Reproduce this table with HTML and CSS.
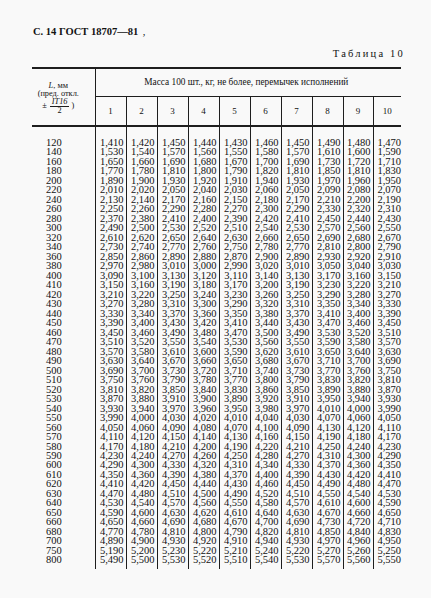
FILE: index.html
```html
<!DOCTYPE html>
<html lang="ru">
<head>
<meta charset="utf-8">
<title>ГОСТ 18707—81, Таблица 10</title>
<link rel="stylesheet" href="styles.css">
</head>
<body>
<div class="page">
  <p class="doc-title">С. 14 ГОСТ 18707—81 <span class="mark">,</span></p>
  <p class="table-caption">Таблица 10</p>
  <table class="mass-table">
    <colgroup>
      <col class="c-len"><col class="c31"><col class="c31"><col class="c31"><col class="c31"><col class="c31"><col class="c31"><col class="c31"><col class="c31"><col class="c30"><col class="c28">
    </colgroup>
    <thead>
      <tr class="h1">
        <th class="len-head" rowspan="2">
          <div class="len-inner">
            <span class="ln"><i>L</i>, мм</span>
            <span class="ln">(пред. откл.</span>
            <span class="ln tol">±<span class="frac"><span class="num">IT16</span><span class="den">2</span></span>&nbsp;)</span>
          </div>
        </th>
        <th class="mass-head" colspan="10">Масса 100 шт., кг, не более, перемычек исполнений</th>
      </tr>
      <tr class="h2">
        <th>1</th><th>2</th><th>3</th><th>4</th><th>5</th><th>6</th><th>7</th><th>8</th><th>9</th><th>10</th>
      </tr>
    </thead>
    <tbody>
      <tr class="first"><td>120</td><td>1,410</td><td>1,420</td><td>1,450</td><td>1,440</td><td>1,430</td><td>1,460</td><td>1,450</td><td>1,490</td><td>1,480</td><td>1,470</td></tr>
      <tr><td>140</td><td>1,530</td><td>1,540</td><td>1,570</td><td>1,560</td><td>1,550</td><td>1,580</td><td>1,570</td><td>1,610</td><td>1,600</td><td>1,590</td></tr>
      <tr><td>160</td><td>1,650</td><td>1,660</td><td>1,690</td><td>1,680</td><td>1,670</td><td>1,700</td><td>1,690</td><td>1,730</td><td>1,720</td><td>1,710</td></tr>
      <tr><td>180</td><td>1,770</td><td>1,780</td><td>1,810</td><td>1,800</td><td>1,790</td><td>1,820</td><td>1,810</td><td>1,850</td><td>1,810</td><td>1,830</td></tr>
      <tr><td>200</td><td>1,890</td><td>1,900</td><td>1,930</td><td>1,920</td><td>1,910</td><td>1,940</td><td>1,930</td><td>1,970</td><td>1,960</td><td>1,950</td></tr>
      <tr><td>220</td><td>2,010</td><td>2,020</td><td>2,050</td><td>2,040</td><td>2,030</td><td>2,060</td><td>2,050</td><td>2,090</td><td>2,080</td><td>2,070</td></tr>
      <tr><td>240</td><td>2,130</td><td>2,140</td><td>2,170</td><td>2,160</td><td>2,150</td><td>2,180</td><td>2,170</td><td>2,210</td><td>2,200</td><td>2,190</td></tr>
      <tr><td>260</td><td>2,250</td><td>2,260</td><td>2,290</td><td>2,280</td><td>2,270</td><td>2,300</td><td>2,290</td><td>2,330</td><td>2,320</td><td>2,310</td></tr>
      <tr><td>280</td><td>2,370</td><td>2,380</td><td>2,410</td><td>2,400</td><td>2,390</td><td>2,420</td><td>2,410</td><td>2,450</td><td>2,440</td><td>2,430</td></tr>
      <tr><td>300</td><td>2,490</td><td>2,500</td><td>2,530</td><td>2,520</td><td>2,510</td><td>2,540</td><td>2,530</td><td>2,570</td><td>2,560</td><td>2,550</td></tr>
      <tr><td>320</td><td>2,610</td><td>2,620</td><td>2,650</td><td>2,640</td><td>2,630</td><td>2,660</td><td>2,650</td><td>2,690</td><td>2,680</td><td>2,670</td></tr>
      <tr><td>340</td><td>2,730</td><td>2,740</td><td>2,770</td><td>2,760</td><td>2,750</td><td>2,780</td><td>2,770</td><td>2,810</td><td>2,800</td><td>2,790</td></tr>
      <tr><td>360</td><td>2,850</td><td>2,860</td><td>2,890</td><td>2,880</td><td>2,870</td><td>2,900</td><td>2,890</td><td>2,930</td><td>2,920</td><td>2,910</td></tr>
      <tr><td>380</td><td>2,970</td><td>2,980</td><td>3,010</td><td>3,000</td><td>2,990</td><td>3,020</td><td>3,010</td><td>3,050</td><td>3,040</td><td>3,030</td></tr>
      <tr><td>400</td><td>3,090</td><td>3,100</td><td>3,130</td><td>3,120</td><td>3,110</td><td>3,140</td><td>3,130</td><td>3,170</td><td>3,160</td><td>3,150</td></tr>
      <tr><td>410</td><td>3,150</td><td>3,160</td><td>3,190</td><td>3,180</td><td>3,170</td><td>3,200</td><td>3,190</td><td>3,230</td><td>3,220</td><td>3,210</td></tr>
      <tr><td>420</td><td>3,210</td><td>3,220</td><td>3,250</td><td>3,240</td><td>3,230</td><td>3,260</td><td>3,250</td><td>3,290</td><td>3,280</td><td>3,270</td></tr>
      <tr><td>430</td><td>3,270</td><td>3,280</td><td>3,310</td><td>3,300</td><td>3,290</td><td>3,320</td><td>3,310</td><td>3,350</td><td>3,340</td><td>3,330</td></tr>
      <tr><td>440</td><td>3,330</td><td>3,340</td><td>3,370</td><td>3,360</td><td>3,350</td><td>3,380</td><td>3,370</td><td>3,410</td><td>3,400</td><td>3,390</td></tr>
      <tr><td>450</td><td>3,390</td><td>3,400</td><td>3,430</td><td>3,420</td><td>3,410</td><td>3,440</td><td>3,430</td><td>3,470</td><td>3,460</td><td>3,450</td></tr>
      <tr><td>460</td><td>3,450</td><td>3,460</td><td>3,490</td><td>3,480</td><td>3,470</td><td>3,500</td><td>3,490</td><td>3,530</td><td>3,520</td><td>3,510</td></tr>
      <tr><td>470</td><td>3,510</td><td>3,520</td><td>3,550</td><td>3,540</td><td>3,530</td><td>3,560</td><td>3,550</td><td>3,590</td><td>3,580</td><td>3,570</td></tr>
      <tr><td>480</td><td>3,570</td><td>3,580</td><td>3,610</td><td>3,600</td><td>3,590</td><td>3,620</td><td>3,610</td><td>3,650</td><td>3,640</td><td>3,630</td></tr>
      <tr><td>490</td><td>3,630</td><td>3,640</td><td>3,670</td><td>3,660</td><td>3,650</td><td>3,680</td><td>3,670</td><td>3,710</td><td>3,700</td><td>3,690</td></tr>
      <tr><td>500</td><td>3,690</td><td>3,700</td><td>3,730</td><td>3,720</td><td>3,710</td><td>3,740</td><td>3,730</td><td>3,770</td><td>3,760</td><td>3,750</td></tr>
      <tr><td>510</td><td>3,750</td><td>3,760</td><td>3,790</td><td>3,780</td><td>3,770</td><td>3,800</td><td>3,790</td><td>3,830</td><td>3,820</td><td>3,810</td></tr>
      <tr><td>520</td><td>3,810</td><td>3,820</td><td>3,850</td><td>3,840</td><td>3,830</td><td>3,860</td><td>3,850</td><td>3,890</td><td>3,880</td><td>3,870</td></tr>
      <tr><td>530</td><td>3,870</td><td>3,880</td><td>3,910</td><td>3,900</td><td>3,890</td><td>3,920</td><td>3,910</td><td>3,950</td><td>3,940</td><td>3,930</td></tr>
      <tr><td>540</td><td>3,930</td><td>3,940</td><td>3,970</td><td>3,960</td><td>3,950</td><td>3,980</td><td>3,970</td><td>4,010</td><td>4,000</td><td>3,990</td></tr>
      <tr><td>550</td><td>3,990</td><td>4,000</td><td>4,030</td><td>4,020</td><td>4,010</td><td>4,040</td><td>4,030</td><td>4,070</td><td>4,060</td><td>4,050</td></tr>
      <tr><td>560</td><td>4,050</td><td>4,060</td><td>4,090</td><td>4,080</td><td>4,070</td><td>4,100</td><td>4,090</td><td>4,130</td><td>4,120</td><td>4,110</td></tr>
      <tr><td>570</td><td>4,110</td><td>4,120</td><td>4,150</td><td>4,140</td><td>4,130</td><td>4,160</td><td>4,150</td><td>4,190</td><td>4,180</td><td>4,170</td></tr>
      <tr><td>580</td><td>4,170</td><td>4,180</td><td>4,210</td><td>4,200</td><td>4,190</td><td>4,220</td><td>4,210</td><td>4,250</td><td>4,240</td><td>4,230</td></tr>
      <tr><td>590</td><td>4,230</td><td>4,240</td><td>4,270</td><td>4,260</td><td>4,250</td><td>4,280</td><td>4,270</td><td>4,310</td><td>4,300</td><td>4,290</td></tr>
      <tr><td>600</td><td>4,290</td><td>4,300</td><td>4,330</td><td>4,320</td><td>4,310</td><td>4,340</td><td>4,330</td><td>4,370</td><td>4,360</td><td>4,350</td></tr>
      <tr><td>610</td><td>4,350</td><td>4,360</td><td>4,390</td><td>4,380</td><td>4,370</td><td>4,400</td><td>4,390</td><td>4,430</td><td>4,420</td><td>4,410</td></tr>
      <tr><td>620</td><td>4,410</td><td>4,420</td><td>4,450</td><td>4,440</td><td>4,430</td><td>4,460</td><td>4,450</td><td>4,490</td><td>4,480</td><td>4,470</td></tr>
      <tr><td>630</td><td>4,470</td><td>4,480</td><td>4,510</td><td>4,500</td><td>4,490</td><td>4,520</td><td>4,510</td><td>4,550</td><td>4,540</td><td>4,530</td></tr>
      <tr><td>640</td><td>4,530</td><td>4,540</td><td>4,570</td><td>4,560</td><td>4,550</td><td>4,580</td><td>4,570</td><td>4,610</td><td>4,600</td><td>4,590</td></tr>
      <tr><td>650</td><td>4,590</td><td>4,600</td><td>4,630</td><td>4,620</td><td>4,610</td><td>4,640</td><td>4,630</td><td>4,670</td><td>4,660</td><td>4,650</td></tr>
      <tr><td>660</td><td>4,650</td><td>4,660</td><td>4,690</td><td>4,680</td><td>4,670</td><td>4,700</td><td>4,690</td><td>4,730</td><td>4,720</td><td>4,710</td></tr>
      <tr><td>680</td><td>4,770</td><td>4,780</td><td>4,810</td><td>4,800</td><td>4,790</td><td>4,820</td><td>4,810</td><td>4,850</td><td>4,840</td><td>4,830</td></tr>
      <tr><td>700</td><td>4,890</td><td>4,900</td><td>4,930</td><td>4,920</td><td>4,910</td><td>4,940</td><td>4,930</td><td>4,970</td><td>4,960</td><td>4,950</td></tr>
      <tr><td>750</td><td>5,190</td><td>5,200</td><td>5,230</td><td>5,220</td><td>5,210</td><td>5,240</td><td>5,220</td><td>5,270</td><td>5,260</td><td>5,250</td></tr>
      <tr class="last"><td>800</td><td>5,490</td><td>5,500</td><td>5,530</td><td>5,520</td><td>5,510</td><td>5,540</td><td>5,530</td><td>5,570</td><td>5,560</td><td>5,550</td></tr>
    </tbody>
  </table>
</div>
</body>
</html>
```
FILE: styles.css
```css
* { box-sizing: border-box; }

body {
  margin: 0;
  background: #f9f9f9;
  color: #121212;
  font-family: "Liberation Serif", "Times New Roman", serif;
}

.page {
  padding: 26px 28px 0 33px;
}

.doc-title {
  margin: 0;
  font-size: 10.5px;
  line-height: 12px;
  font-weight: bold;
}

.doc-title .mark {
  margin-left: 2px;
  font-weight: normal;
}

.table-caption {
  margin: 10px -2px 0 0;
  text-align: right;
  font-size: 10.5px;
  line-height: 12px;
  letter-spacing: 2.2px;
}

.mass-table {
  margin: 7px 0 0 -1px;
  width: 369px;
  border-collapse: collapse;
  table-layout: fixed;
  border-top: 2px solid #1e1e1e;
}

.c-len { width: 63px; }
.c31 { width: 31px; }
.c30 { width: 30px; }
.c28 { width: 28px; }

.mass-table th {
  font-weight: normal;
  padding: 0;
}

.len-head {
  border-right: 1px solid #1e1e1e;
  border-bottom: 2px solid #1e1e1e;
  vertical-align: top;
  padding: 13px 10px 0 0 !important;
}

.len-inner {
  display: flex;
  flex-direction: column;
  align-items: center;
  font-size: 8.3px;
  line-height: 8px;
}

.len-inner .ln {
  white-space: nowrap;
}

.tol {
  display: flex;
  align-items: center;
  margin-top: 0;
}

.frac {
  display: inline-flex;
  flex-direction: column;
  align-items: center;
  margin-left: 3px;
}

.frac .num {
  font-style: italic;
  border-bottom: 1px solid #1e1e1e;
  padding: 0 2px;
  line-height: 7.5px;
}

.frac .den {
  line-height: 7.5px;
}

.mass-head {
  height: 28px;
  font-size: 9.3px;
  border-bottom: 1px solid #1e1e1e;
  text-align: center;
  padding-right: 4px !important;
}

.h2 th {
  height: 30px;
  font-size: 9px;
  border-left: 1px solid #1e1e1e;
  border-bottom: 2px solid #1e1e1e;
  text-align: center;
}

.mass-table td {
  padding: 0 2px 0 0;
  font-size: 10.5px;
  line-height: 9.48px;
  height: 9.48px;
  text-align: right;
  white-space: nowrap;
  border-left: 1px solid #1e1e1e;
}

.mass-table td:first-child {
  border-left: none;
  text-align: left;
  padding-left: 14px;
}

.mass-table td:last-child {
  padding-right: 0;
  overflow: visible;
}

.mass-table tr.first td {
  padding-top: 11px;
  height: 20.5px;
}

.mass-table tr.last td {
  padding-bottom: 4px;
  height: 13.5px;
}
```
